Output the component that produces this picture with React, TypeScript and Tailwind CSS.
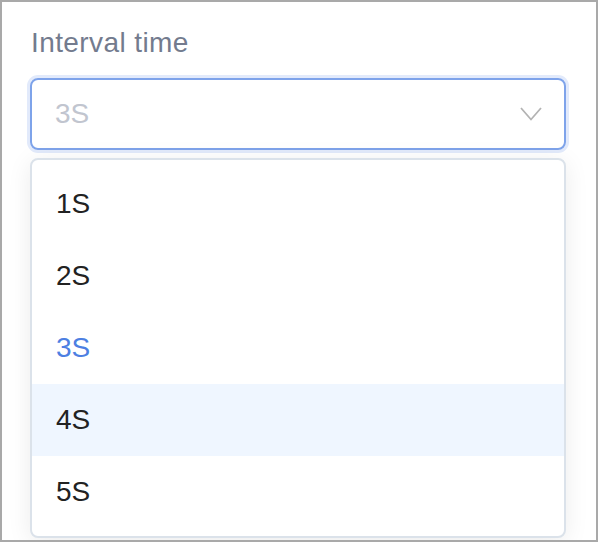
export default function App() {
  const options = ["1S", "2S", "3S", "4S", "5S"];
  const selected = "3S";
  const hovered = "4S";
  return (
    <div
      className="w-[598px] h-[542px] border-2 border-[#a9a9a9] bg-white pt-[21px] pl-[28px] overflow-hidden"
      style={{ fontFamily: '"Liberation Sans", Arial, sans-serif' }}
    >
      <div className="text-[28px] leading-[40px] tracking-[0.4px] text-[#737b8e] mb-[15px] pl-[1px]">Interval time</div>
      <div className="w-[536px] h-[72px] rounded-[8px] border-2 border-[#7ea3ea] shadow-[0_0_0_3px_#e2eafb] flex items-center justify-between pl-[23px] pr-[22px]">
        <span className="text-[28px] text-[#c1c5cf]">3S</span>
        <svg width="22" height="14" viewBox="0 0 22 14" fill="none">
          <polyline points="1,1 11,12.5 21,1" stroke="#b3b3b3" strokeWidth="1.8" />
        </svg>
      </div>
      <div className="mt-[8px] w-[536px] rounded-[8px] border-2 border-[#dbe2ea] bg-white py-[8px] shadow-[0_4px_24px_rgba(0,0,0,0.08)]">
        {options.map((o) => (
          <div
            key={o}
            className={`h-[72px] flex items-center pl-[24px] text-[28px] ${
              o === hovered ? "bg-[#eff6ff]" : ""
            } ${o === selected ? "text-[#4d7fe2]" : "text-[#222222]"}`}
          >
            {o}
          </div>
        ))}
      </div>
    </div>
  );
}
